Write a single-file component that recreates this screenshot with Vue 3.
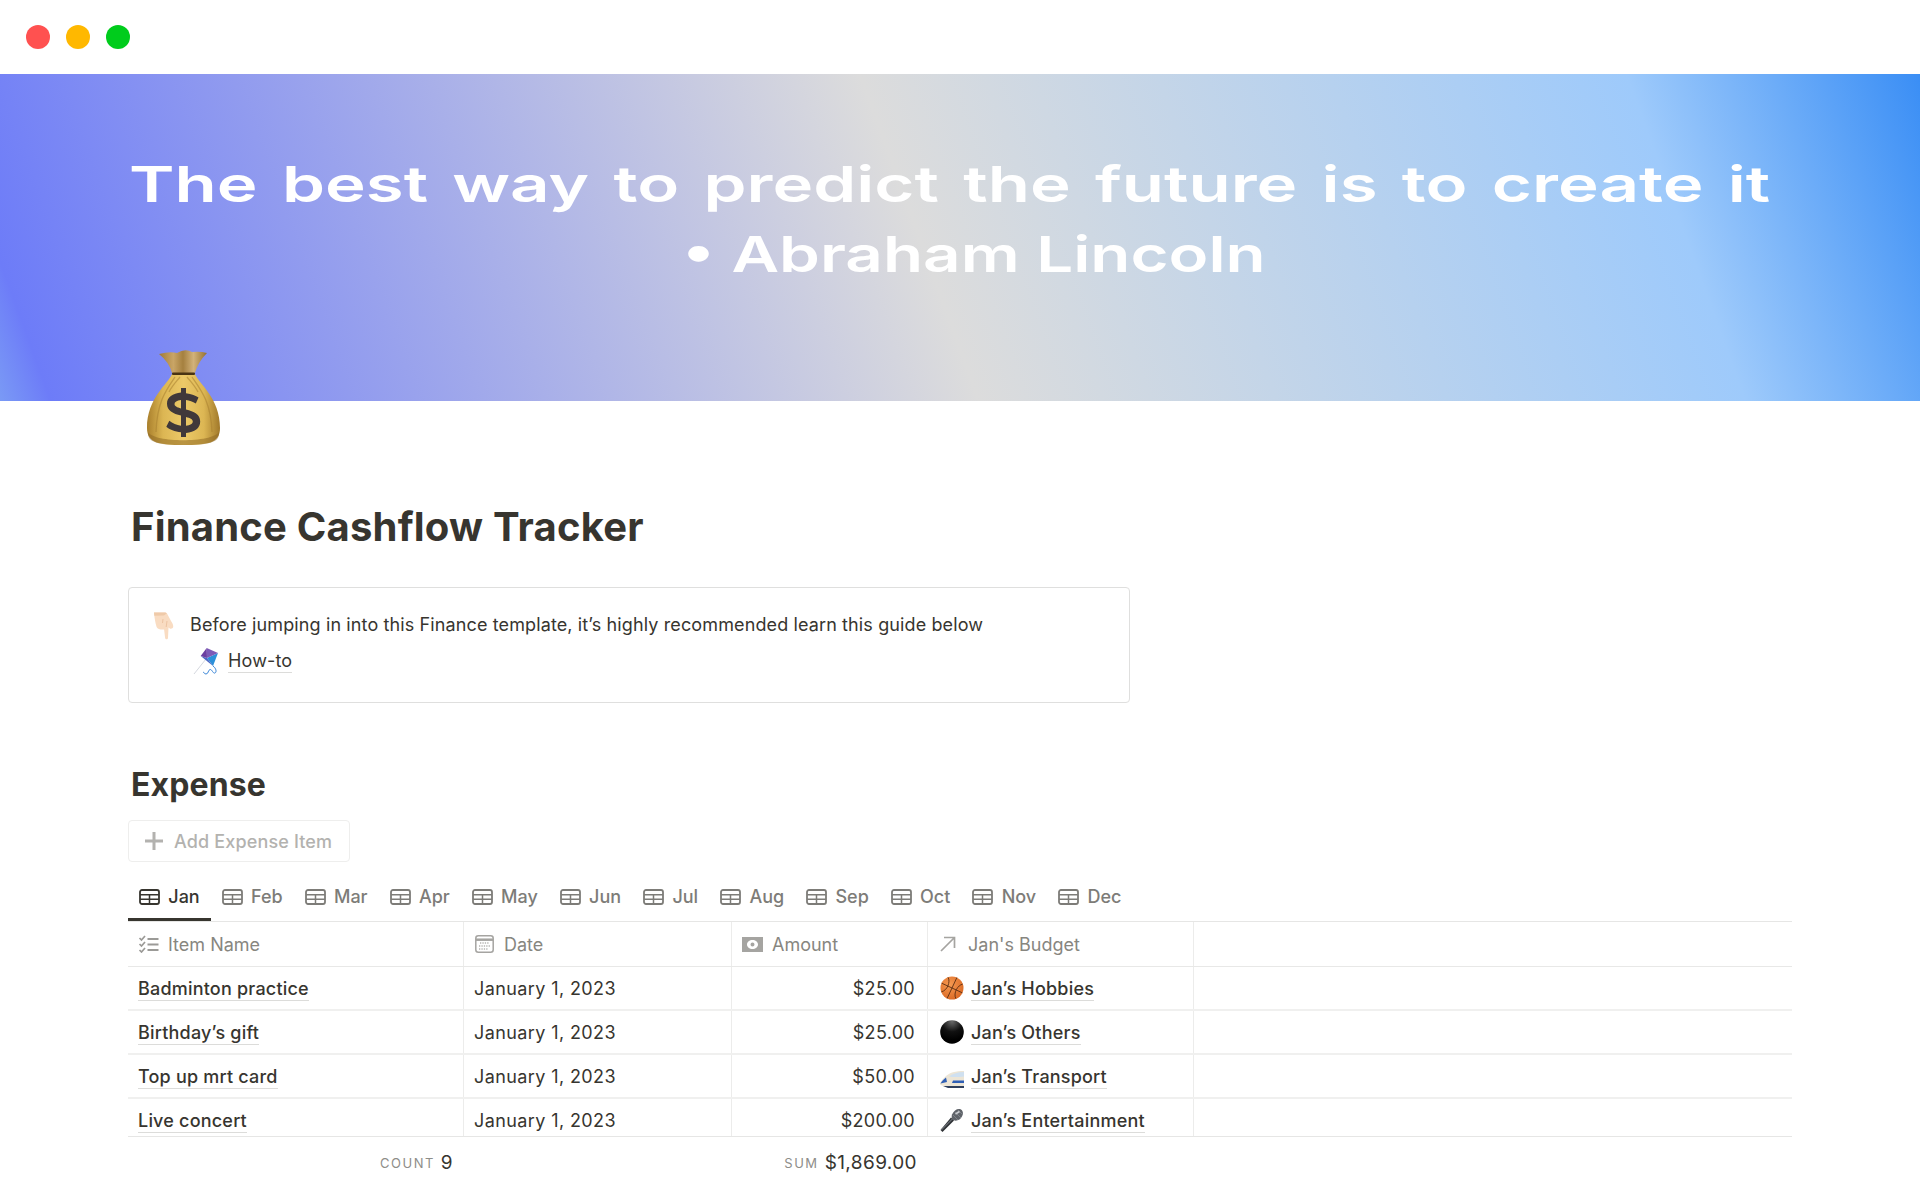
<script setup>
const months = ['Jan','Feb','Mar','Apr','May','Jun','Jul','Aug','Sep','Oct','Nov','Dec']
const rows = [
  { name: 'Badminton practice', date: 'January 1, 2023', amount: '$25.00', budget: 'Jan’s Hobbies', icon: 'ball' },
  { name: 'Birthday’s gift', date: 'January 1, 2023', amount: '$25.00', budget: 'Jan’s Others', icon: 'black' },
  { name: 'Top up mrt card', date: 'January 1, 2023', amount: '$50.00', budget: 'Jan’s Transport', icon: 'train' },
  { name: 'Live concert', date: 'January 1, 2023', amount: '$200.00', budget: 'Jan’s Entertainment', icon: 'mic' },
]
</script>

<template>
  <div class="page">
    <header class="titlebar">
      <span class="dot red"></span><span class="dot yellow"></span><span class="dot green"></span>
    </header>

    <section class="banner">
      <div class="quote one">The best way to predict the future is to create it</div>
      <div class="quote two">• Abraham Lincoln</div>
    </section>

    <main class="content">
      <svg class="bag" viewBox="0 0 110 110" aria-hidden="true">
        <defs>
          <linearGradient id="bagBody" x1="0" y1="0" x2="1" y2="0">
            <stop offset="0" stop-color="#a97f2c"/><stop offset=".22" stop-color="#dcb653"/>
            <stop offset=".5" stop-color="#ecc968"/><stop offset=".78" stop-color="#dcb653"/><stop offset="1" stop-color="#a0782a"/>
          </linearGradient>
          <linearGradient id="bagTop" x1="0" y1="0" x2="1" y2="0">
            <stop offset="0" stop-color="#a07a36"/><stop offset=".3" stop-color="#c9a566"/>
            <stop offset=".5" stop-color="#a5803f"/><stop offset=".72" stop-color="#d2b27a"/><stop offset="1" stop-color="#94702f"/>
          </linearGradient>
        </defs>
        <path d="M29 14 Q40 11 47 13 Q55 8 62 12 Q70 11 77 13 Q68 22 65 33 L42 33 Q39 22 29 14Z" fill="url(#bagTop)"/>
        <path d="M42 34 C38 44 17 58 17 88 C17 103 30 105 53 105 C78 105 90 103 90 88 C90 58 69 44 65 34Z" fill="url(#bagBody)"/>
        <path d="M45 37 C36 50 27 62 26 92 M62 37 C71 50 81 62 82 92 M50 37 C46 42 42 46 39 52 M57 37 C61 42 65 46 68 52" stroke="#a87f2f" stroke-width="1.300" fill="none" opacity=".55"/>
        <path d="M18 92 C24 103 82 103 89 92 C90 103 78 105 53 105 C30 105 17 103 18 92Z" fill="#8f6a24" opacity=".55"/>
        <rect x="42" y="32.500" width="23" height="2.500" rx="1" fill="#4a3413"/>
        <path d="M51 48h5v5.200c5.500.6 10 2.600 12.500 4.400l-2.700 6c-3-1.900-6.400-3.100-9.800-3.500v9.400c8 2 14.200 4.800 14.200 12 0 6.700-5.600 10.800-14.200 11.500V97h-5v-4.800c-6.200-.5-11.600-2.700-14.700-5.400l3-6c3.200 2.600 7.400 4.500 11.700 5V75.600c-8-2-14-4.600-14-11.800 0-6.600 5.700-10.400 14-11.200zm0 12c-4.200.5-6.500 1.900-6.500 4 0 2.200 2.500 3.300 6.500 4.500zm5 16.900v8.800c4.300-.5 6.800-2 6.800-4.300 0-2.300-2.700-3.400-6.800-4.500z" fill="#40383a"/>
      </svg>

      <h1 class="title">Finance Cashflow Tracker</h1>

      <div class="callout">
        <svg class="finger" viewBox="0 0 22 28" aria-hidden="true">
          <path d="M1 .5h11c1 0 1.800.5 2.300 1.500l3.700 7c1.300 2 2.600 4.300 2.200 6-.4 1.500-2 2-3.400 1.400l-1.300-.8-.5 10.400c-.1 1.800-2.700 1.800-2.900 0l-1-8.500c-3 .4-6.500-.2-7.500-2.500C2.300 11 1.500 6 1 .5z" fill="#f9dcc2"/>
          <path d="M1 .5h11c.8 0 1.300.2 1.800.8L11 3.500 1.300 3.800z" fill="#efcaa9"/>
          <path d="M14 9l-.8 6M10 7l-.5 4" stroke="#e9bd99" stroke-width=".8" fill="none"/>
        </svg>
        <div class="callout-body">
          <p class="callout-text">Before jumping in into this Finance template, it’s highly recommended learn this guide below</p>
          <div class="howto">
            <svg class="kite" viewBox="0 0 26 27" aria-hidden="true">
              <path d="M1 26 L13 11" stroke="#cfd3da" stroke-width=".9" fill="none"/>
              <path d="M14 10 L25 5 L20 18Z" fill="#2c90d9"/>
              <path d="M14 10 L20 18 L7.700 8Z" fill="#4a66c4"/>
              <path d="M13.700 0 L7.700 8 L14 10Z" fill="#6b3fa0"/>
              <path d="M13.700 0 L25 5 L14 10Z" fill="#7d5ab8"/>
              <path d="M20 18 C23 20 24 24 22 25 C20 26 19 21 17 21.500 C15 22 15.500 26 13 26 C11 26 11 24 10 24" stroke="#3a86d8" stroke-width="1" fill="none"/>
            </svg>
            <span class="link">How-to</span>
          </div>
        </div>
      </div>

      <h2 class="heading">Expense</h2>

      <div class="add">
        <svg class="plus" viewBox="0 0 18 18" aria-hidden="true"><path d="M7.500 0h3v7.500H18v3h-7.500V18h-3v-7.500H0v-3h7.500z" fill="#b3b2af"/></svg>
        <span>Add Expense Item</span>
      </div>

      <nav class="tabs">
        <div v-for="(m, i) in months" :key="m" class="tab" :class="{ active: i === 0 }">
          <svg class="tableicon" viewBox="0 0 21 16" aria-hidden="true">
            <rect x="1" y="1" width="19" height="14" rx="2" fill="none" stroke="currentColor" stroke-width="1.800"/>
            <path d="M1 5.700h19M1 10.300h19M10.500 5.700V15" stroke="currentColor" stroke-width="1.500" fill="none"/>
          </svg>
          <span>{{ m }}</span>
        </div>
      </nav>

      <div class="table">
        <div class="row head">
          <div class="cell">
            <svg class="hicon" viewBox="0 0 20 18" aria-hidden="true">
              <path d="M1 3l2 2 3.500-4M1 9l2 2 3.500-4M1 15l2 2 3.500-4" stroke="#9b9a97" stroke-width="1.700" fill="none"/>
              <path d="M9 4h11M9 9.500h11M9 15h11" stroke="#9b9a97" stroke-width="2" fill="none"/>
            </svg>
            Item Name
          </div>
          <div class="cell">
            <svg class="hicon" viewBox="0 0 19 18" aria-hidden="true">
              <rect x=".8" y=".8" width="17.400" height="16.400" rx="2.500" fill="none" stroke="#a5a4a1" stroke-width="1.500"/>
              <path d="M1 4.700h17" stroke="#a5a4a1" stroke-width="2.500"/>
              <path d="M5 8h9M4 11h11M4 14h9" stroke="#b5b4b1" stroke-width="1.300" stroke-dasharray="1.300 1.100" fill="none"/>
            </svg>
            Date
          </div>
          <div class="cell">
            <svg class="hicon money" viewBox="0 0 21 15" aria-hidden="true">
              <path fill-rule="evenodd" d="M0 0h21v15H0zM10.500 3C7.500 3 5 5 5 7.500S7.500 12 10.500 12 16 10 16 7.500 13.500 3 10.500 3zm0 2.500a2 2 0 1 1 0 4 2 2 0 0 1 0-4z" fill="#a5a4a1"/>
            </svg>
            Amount
          </div>
          <div class="cell">
            <svg class="hicon arrow" viewBox="0 0 16 16" aria-hidden="true">
              <path d="M1 15L14.500 1.500M4 1.500h10.500V12" stroke="#a5a4a1" stroke-width="1.700" fill="none"/>
            </svg>
            Jan's Budget
          </div>
          <div class="cell"></div>
        </div>

        <div v-for="r in rows" :key="r.name" class="row body">
          <div class="cell strong"><span class="link">{{ r.name }}</span></div>
          <div class="cell">{{ r.date }}</div>
          <div class="cell num">{{ r.amount }}</div>
          <div class="cell strong budget">
            <svg class="emoji" viewBox="0 0 24 24" aria-hidden="true">
              <template v-if="r.icon === 'ball'">
                <defs><radialGradient id="ballFill" cx=".4" cy=".35" r=".75"><stop offset="0" stop-color="#f69a52"/><stop offset="1" stop-color="#d8641f"/></radialGradient></defs>
                <circle cx="12" cy="12" r="11.500" fill="url(#ballFill)"/>
                <path d="M12 .5V23.500M.5 12H23.500M4 4c4 3 5 12 0 16M20 4c-4 3-5 12 0 16" stroke="#5a2d12" stroke-width=".8" fill="none" transform="rotate(25 12 12)"/>
              </template>
              <template v-else-if="r.icon === 'black'">
                <defs><radialGradient id="blackFill" cx=".5" cy=".05" r=".8"><stop offset="0" stop-color="#6a6a6a"/><stop offset=".55" stop-color="#111"/><stop offset="1" stop-color="#000"/></radialGradient></defs>
                <circle cx="12" cy="12" r="11.800" fill="url(#blackFill)"/>
              </template>
              <g v-else-if="r.icon === 'train'" transform="translate(0 3)">
                <path d="M24 4 C16 4 9 5.500 5 10 C2 13 0 15 0 17 C1 19 6 19.500 12 19.500 H24Z" fill="#ece5d6"/>
                <path d="M24 5 C18 5 13 6.500 9 9.500 C14 10.500 19 10 24 9.500Z" fill="#cfe0f0"/>
                <path d="M6 10.500 C3.500 12.500 1.500 14.500 0.500 16.500 L7 15Z" fill="#2f5fb5"/>
                <path d="M13 13.500 H24 V16 H12Z" fill="#2f5fb5"/>
                <path d="M3 19 H24 V21 H8Z" fill="#2f3f5c"/>
              </g>
              <template v-else>
                <path d="M0.500 22 L2.500 24 L14 12.500 L11 9.500Z" fill="#2e3135"/>
                <path d="M1 21.500 L12 10.500 L12.800 11.300 L1.800 22.300Z" fill="#6c7076"/>
                <path d="M12 6.500 C14 2 18 0 21 1.500 C24 3.500 23.500 8 19.500 11.500 C17 13 14 13 12.500 11.500 C11.500 10.500 11.500 8 12 6.500Z" fill="#5f6369"/>
                <path d="M13 7 L18 12 M15 4 L21 10 M18 2 L23 7" stroke="#85898f" stroke-width=".8"/>
                <path d="M15.500 6l4-2.500" stroke="#c9ccd0" stroke-width="1.600"/>
              </template>
            </svg>
            <span class="link">{{ r.budget }}</span>
          </div>
          <div class="cell"></div>
        </div>
      </div>

      <div class="footer">
        <div class="calc first"><span class="calc-label">COUNT</span><span class="calc-value">9</span></div>
        <div class="calc second"><span class="calc-label">SUM</span><span class="calc-value">$1,869.00</span></div>
      </div>
    </main>
  </div>
</template>

<style>
html, body { margin: 0; background: #fff; }
</style>

<style scoped>
.page {
  width: 1920px;
  height: 1200px;
  overflow: hidden;
  background: #fff;
  font-family: Inter, "Liberation Sans", sans-serif;
  color: #37352f;
}
.titlebar {
  height: 74px;
  box-sizing: border-box;
  padding: 25px 0 0 26px;
  display: flex;
  gap: 16px;
}
.dot { width: 24px; height: 24px; border-radius: 50%; }
.red { background: #ff5150; }
.yellow { background: #ffb800; }
.green { background: #00cc1c; }

.banner {
  height: 327px;
  box-sizing: border-box;
  padding-top: 75px;
  background: linear-gradient(70deg, #7a9af5 0%, #6d7cf8 2.5%, #dcdcdc 48%, #9ecafb 85.6%, #3a8ef5 100%);
  display: flex;
  flex-direction: column;
  align-items: center;
}
.quote {
  font-family: Inter, sans-serif;
  font-size: 50px;
  line-height: 70px;
  font-weight: 600;
  color: #fff;
  white-space: nowrap;
  filter: blur(0.4px);
}
.one { word-spacing: 5px; transform: translateX(-10px) scaleX(1.38); }
.two { transform: translateX(14px) scaleX(1.31); }

.content {
  padding-left: 128px;
  width: 1664px;
}
.bag {
  display: block;
  width: 110px;
  height: 110px;
  margin: -61px 0 0 2px;
  position: relative;
}
.title {
  margin: 53px 0 0 3px;
  font-size: 40px;
  line-height: 48px;
  font-weight: 700;
  letter-spacing: 0.2px;
}
.callout {
  margin-top: 36px;
  width: 1002px;
  height: 116px;
  box-sizing: border-box;
  border: 1px solid #dfdfde;
  border-radius: 4px;
  display: flex;
  padding: 24px 0 0 24px;
}
.finger { width: 22px; height: 28px; flex: none; }
.callout-body { margin-left: 15px; }
.callout-text {
  margin: 0;
  font-size: 18px;
  line-height: 26px;
  letter-spacing: 0.12px;
}
.howto {
  margin-top: 10px;
  display: flex;
  align-items: center;
  gap: 9px;
  margin-left: 3px;
  font-size: 18px;
  line-height: 26px;
  letter-spacing: 0.15px;
}
.kite { width: 26px; height: 27px; }
.link {
  border-bottom: 1px solid #dcdcda;
  line-height: 22px;
  display: inline-block;
}
.heading {
  margin: 62px 0 0 3px;
  font-size: 32px;
  line-height: 40px;
  font-weight: 700;
  letter-spacing: 0.1px;
}
.add {
  margin-top: 15px;
  width: 222px;
  height: 42px;
  box-sizing: border-box;
  border: 1px solid #eeeeed;
  border-radius: 4px;
  display: flex;
  align-items: center;
  gap: 11px;
  padding-left: 16px;
  font-size: 18px;
  font-weight: 500;
  letter-spacing: 0.15px;
  color: #b3b2af;
}
.plus { width: 18px; height: 18px; }
.tabs {
  margin-top: 16px;
  height: 44px;
  width: 1664px;
  box-sizing: border-box;
  border-bottom: 1px solid #e6e6e5;
  display: flex;
}
.tab {
  display: flex;
  align-items: center;
  gap: 8.300px;
  padding: 0 11px 6px;
  height: 43px;
  box-sizing: border-box;
  font-size: 18px;
  font-weight: 500;
  color: #7d7c78;
  white-space: nowrap;
}
.tab.active {
  color: #37352f;
  border-bottom: 3px solid #37352f;
  padding-bottom: 3px;
}
.tableicon { width: 21px; height: 16px; }
.table {
  width: 1664px;
  height: 215px;
  overflow: hidden;
  border-bottom: 1px solid #e6e6e5;
  box-sizing: border-box;
}
.row {
  display: grid;
  grid-template-columns: 335px 268px 196px 266px 1fr;
  height: 44px;
  box-sizing: border-box;
  border-bottom: 2px solid #f0f0ef;
  font-size: 18px;
}
.body { letter-spacing: 0.4px; }
.head {
  height: 45px;
  border-bottom: 1px solid #e8e8e7;
  color: #87867f;
}
.cell {
  display: flex;
  align-items: center;
  padding: 0 10px;
  box-sizing: border-box;
  border-left: 1px solid #ececeb;
  white-space: nowrap;
}
.cell:first-child { border-left: 0; }
.strong { font-weight: 500; letter-spacing: 0.2px; }
.body .link { margin-top: 2px; }
.budget { padding-left: 12px; }
.num { justify-content: flex-end; padding-right: 12px; letter-spacing: 0.3px; }
.hicon { width: 21px; height: 18px; margin-right: 9px; flex: none; }
.money { height: 15px; }
.arrow { width: 16px; height: 16px; margin-left: 2px; margin-right: 12px; }
.emoji { width: 24px; height: 24px; margin-right: 7px; flex: none; }
.footer {
  display: grid;
  grid-template-columns: 335px 464px;
  height: 46px;
  width: 799px;
  padding-top: 2px;
}
.calc {
  display: flex;
  justify-content: flex-end;
  align-items: center;
  gap: 6px;
}
.first { padding-right: 10px; }
.second { padding-right: 10px; }
.calc-label {
  font-size: 13px;
  letter-spacing: 1.500px;
  color: #8e8d89;
  margin-top: 2px;
}
.calc-value { font-size: 19px; letter-spacing: 0.4px; }
</style>
